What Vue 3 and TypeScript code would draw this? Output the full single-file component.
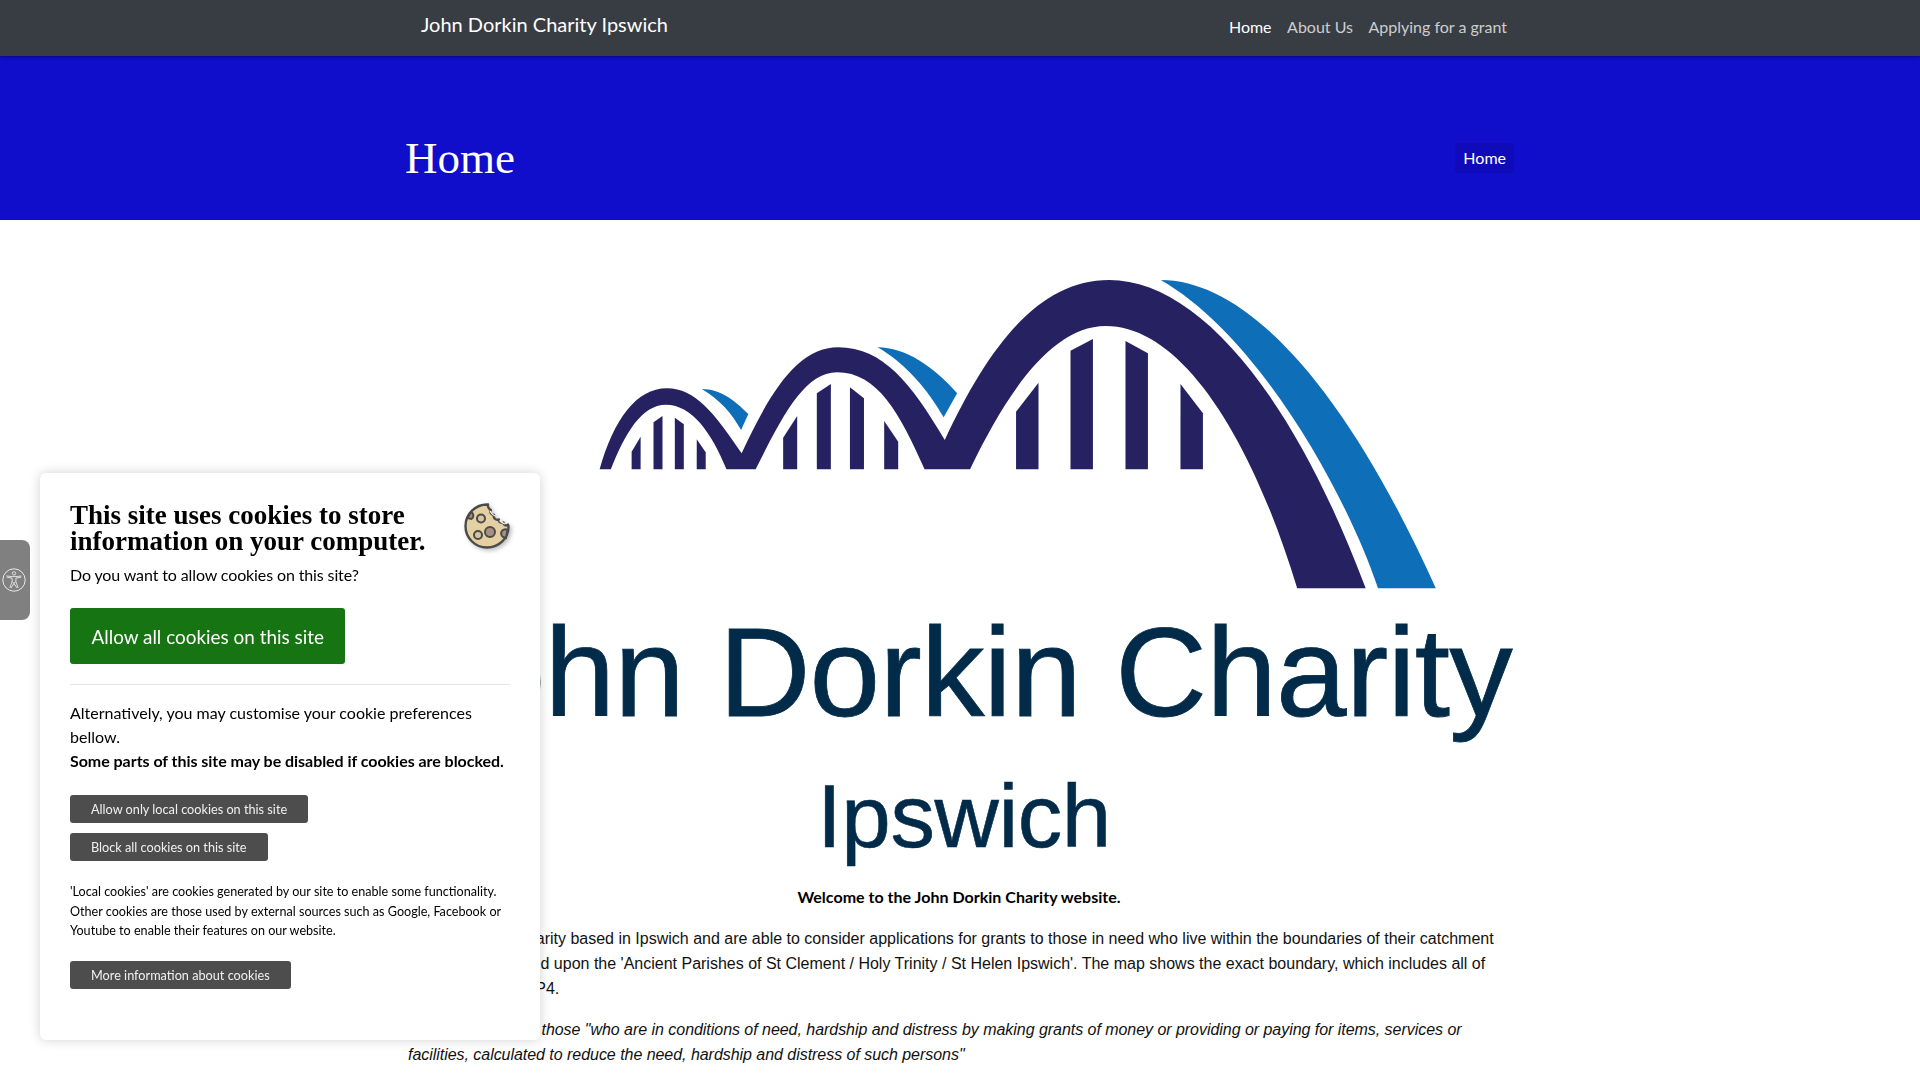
<template>
  <div class="page">
    <nav class="topbar">
      <div class="topbar-inner">
        <a class="brand">John Dorkin Charity Ipswich</a>
        <ul class="nav-links">
          <li v-for="link in navLinks" :key="link" :class="{ active: link === 'Home' }">{{ link }}</li>
        </ul>
      </div>
    </nav>

    <header class="banner">
      <div class="banner-inner">
        <h1>Home</h1>
        <span class="crumb">Home</span>
      </div>
    </header>

    <main class="content">
      <svg class="logo" viewBox="0 0 1110 664" width="1110" height="664">
        <g transform="translate(175 40) scale(0.5612 0.3333)">
          <path
            fill="#262262"
            d="M35 628 C60 480 100 385 155 385 C205 385 240 460 288 580 C340 390 390 262 460 262 C540 262 590 370 650 540 C730 250 820 60 943 60 C1095 60 1265 380 1400 985 L1278 985 C1190 500 1065 198 937 198 C840 198 760 400 695 628 L614 628 C570 460 530 337 458 337 C400 337 360 470 313 628 L261 628 C235 520 200 434 153 434 C110 434 80 520 55 628 Z"
          />
          <polygon
            v-for="bar in bars"
            :key="bar"
            fill="#262262"
            :points="bar"
          />
          <path fill="#0f6eb8" d="M1035 60 C1180 60 1355 350 1525 985 L1422 985 C1365 700 1210 230 1035 60 Z" />
          <path fill="#0f6eb8" d="M530 262 C580 262 630 320 672 400 L648 472 C620 390 580 310 530 262 Z" />
          <path fill="#0f6eb8" d="M217 387 C250 387 275 420 300 462 L287 510 C270 460 250 420 217 387 Z" />
        </g>
        <text class="logo-big" x="1107" y="496" text-anchor="end">John Dorkin Charity</text>
        <text class="logo-small" x="412" y="627">Ipswich</text>
      </svg>

      <p class="welcome">Welcome to the John Dorkin Charity website.</p>
      <p class="body-text">
        We are a small charity based in Ipswich and are able to consider applications for grants to those in need who live within the boundaries of their catchment area which is based upon the 'Ancient Parishes of St Clement / Holy Trinity / St Helen Ipswich'. The map shows the exact boundary, which includes all of<br />
        the area IP3 and IP4.
      </p>
      <p class="body-text"><em>Our goal is to help those "who are in conditions of need, hardship and distress by making grants of money or providing or paying for items, services or facilities, calculated to reduce the need, hardship and distress of such persons"</em></p>
    </main>

    <div class="access-tab">
      <svg viewBox="0 0 24 24" width="24" height="24" fill="none" stroke="#e8e8e8">
        <circle cx="12" cy="12" r="11.2" stroke-width="1" />
        <circle cx="12" cy="5.4" r="1.7" stroke-width="0.9" />
        <path stroke-width="0.9" d="M4.5 8 L10 8.6 H14 L19.5 8 M4.8 9.2 L10 10 L10.2 13.4 L7.8 20 M19.2 9.2 L14 10 L13.8 13.4 L16.2 20 M10.2 13.4 L12 15.5 L13.8 13.4 M9 20 L12 15.5 L15 20" />
      </svg>
    </div>

    <aside class="cookie-panel">
      <div class="cookie-head">
        <h2>This site uses cookies to store information on your computer.</h2>
        <svg class="cookie-icon" viewBox="0 0 46 46" width="46" height="46">
          <path
            fill="#e4d0a2"
            stroke="#4b4b4b"
            stroke-width="2.4"
            stroke-linejoin="round"
            d="M24 1.5 C12 1 1.5 10.500 1.500 23 C1.500 35 11 44.500 23 44.500 C35 44.500 44.500 35 44.500 24 C44.500 23 44.300 22 44 21.500 C42 23.500 39.500 22 39.500 19.500 C37 20.500 34.500 19 34.800 16.500 C31.500 17.500 29 15 30 12 C27 11.500 25.500 9 26.800 7 C25 6 23.500 3.500 24 1.500 Z"
          />
          <path fill="none" stroke="#fff" stroke-width="1.200" d="M26 8 C27 10 29 12 31 13 M35.500 17.500 C37 19 39 20.500 41 21" />
          <circle cx="17" cy="15.500" r="4" fill="#d9c3a2" stroke="#4b4b4b" stroke-width="2" />
          <circle cx="26" cy="29" r="5" fill="#a99182" stroke="#4b4b4b" stroke-width="2" />
          <circle cx="14" cy="32" r="4" fill="#d9c3a2" stroke="#4b4b4b" stroke-width="2" />
          <path fill="#a99182" stroke="#4b4b4b" stroke-width="2" d="M7 9 A4 4 0 0 1 7.500 16 L3.500 15 Z" />
          <path fill="#a99182" stroke="#4b4b4b" stroke-width="2" d="M43.500 27 A4 4 0 0 0 39 34 L42 35 Z" />
        </svg>
      </div>
      <p class="question">Do you want to allow cookies on this site?</p>
      <button class="btn-allow">Allow all cookies on this site</button>
      <hr />
      <p class="alt-text">
        Alternatively, you may customise your cookie preferences bellow.<br />
        <strong>Some parts of this site may be disabled if cookies are blocked.</strong>
      </p>
      <div class="small-buttons">
        <button class="btn-small">Allow only local cookies on this site</button>
        <button class="btn-small">Block all cookies on this site</button>
      </div>
      <p class="note">
        'Local cookies' are cookies generated by our site to enable some functionality. Other cookies are those used by external sources such as Google, Facebook or Youtube to enable their features on our website.
      </p>
      <button class="btn-small">More information about cookies</button>
    </aside>
  </div>
</template>

<script setup lang="ts">
const navLinks: string[] = ['Home', 'About Us', 'Applying for a grant']

// supports of the three arches, traced off the logo
const bars: string[] = [
  '92,628 92,575 108,530 108,628',
  '131,628 131,487 147,468 147,628',
  '169,628 169,473 185,493 185,628',
  '208,628 208,538 224,577 224,628',
  '362,628 362,533 387,468 387,628',
  '422,628 422,400 447,372 447,628',
  '481,628 481,382 506,415 506,628',
  '542,628 542,483 567,545 567,628',
  '777,628 777,455 817,368 817,628',
  '874,628 874,272 914,237 914,628',
  '972,628 972,243 1012,280 1012,628',
  '1070,628 1070,372 1110,460 1110,628',
]
</script>

<style>
html,
body {
  margin: 0;
  background: #fff;
}
</style>

<style scoped>
.page {
  font-family: Lato, 'Liberation Sans', sans-serif;
  color: #000;
}

.topbar {
  position: relative;
  height: 56px;
  background-color: #383c43;
  box-shadow: 0 1px 3px rgba(0, 0, 0, 0.4);
}

.topbar-inner {
  width: 1140px;
  margin: 0 auto;
  padding: 0 23px 0 31px;
  box-sizing: border-box;
  display: flex;
  justify-content: space-between;
}

.brand {
  font-size: 20px;
  line-height: 24px;
  margin-top: 12px;
  color: #fff;
}

.nav-links {
  display: flex;
  gap: 15.5px;
  list-style: none;
  margin: 15px 0 0;
  padding: 0;
  font-size: 16px;
  line-height: 24px;
  color: rgba(255, 255, 255, 0.75);
}

.nav-links .active {
  color: #fff;
}

.banner {
  height: 164px;
  background-color: #100dcb;
}

.banner-inner {
  width: 1140px;
  height: 100%;
  margin: 0 auto;
  padding: 40px 16px 0 15px;
  box-sizing: border-box;
  display: flex;
  justify-content: space-between;
  align-items: center;
}

.banner h1 {
  margin: 0;
  font-family: 'Liberation Serif', serif;
  font-weight: 400;
  font-size: 45px;
  color: #fff;
}

.crumb {
  padding: 3px 8px;
  font-size: 16px;
  line-height: 24px;
  color: #fff;
  background-color: #0f0bb8;
  border-radius: 4px;
}

.content {
  width: 1140px;
  margin: 0 auto;
  padding: 0 15px;
  box-sizing: border-box;
}

.logo {
  display: block;
}

.logo-big {
  font-family: 'Liberation Sans', sans-serif;
  font-size: 127px;
  letter-spacing: -0.8px;
  fill: #022b4a;
  stroke: #022b4a;
  stroke-width: 0.8px;
}

.logo-small {
  font-family: 'Liberation Sans', sans-serif;
  font-size: 89px;
  letter-spacing: -0.4px;
  fill: #022b4a;
  stroke: #022b4a;
  stroke-width: 0.6px;
}

.welcome {
  margin: 0 2px 17px 0;
  font-size: 16px;
  line-height: 25px;
  font-weight: 700;
  letter-spacing: 0.02px;
  text-align: center;
}

.body-text {
  margin: 0 0 16px;
  padding: 0 3px;
  font-family: 'Liberation Sans', sans-serif;
  font-size: 16px;
  line-height: 25px;
  color: #111;
}

.body-text em {
  letter-spacing: -0.04px;
}

.access-tab {
  position: fixed;
  left: 0;
  top: 540px;
  width: 30px;
  height: 80px;
  display: flex;
  align-items: center;
  padding-left: 2px;
  box-sizing: border-box;
  background-color: #808080;
  border-radius: 0 8px 8px 0;
}

.cookie-panel {
  position: fixed;
  left: 40px;
  top: 473px;
  width: 500px;
  height: 567px;
  padding: 30px;
  box-sizing: border-box;
  background: #fff;
  border-radius: 6px;
  box-shadow: 0 0 12px rgba(0, 0, 0, 0.18);
}

.cookie-head {
  display: flex;
  justify-content: space-between;
  align-items: flex-start;
}

.cookie-head h2 {
  width: 380px;
  margin: -1px 0 1px;
  font-family: 'Liberation Serif', serif;
  font-weight: 700;
  font-size: 27px;
  line-height: 26px;
}

.cookie-icon {
  filter: drop-shadow(2px 2px 2px rgba(0, 0, 0, 0.25));
}

.question {
  margin: 8px 0 0;
  font-size: 16px;
  line-height: 24px;
  letter-spacing: -0.12px;
}

.btn-allow {
  display: block;
  margin-top: 21px;
  height: 56px;
  padding: 0 21.5px;
  border: 0;
  border-radius: 3px;
  font-family: inherit;
  font-size: 18.9px;
  color: #fff;
  background-color: #177413;
}

hr {
  margin: 20px 0 16px;
  border: 0;
  border-top: 1px solid #e3e3e3;
}

.alt-text {
  margin: 0;
  font-size: 16px;
  line-height: 24px;
}

.alt-text strong {
  letter-spacing: -0.04px;
}

.small-buttons {
  display: flex;
  flex-direction: column;
  align-items: flex-start;
  gap: 10px;
  margin-top: 22px;
}

.btn-small {
  display: block;
  height: 28px;
  padding: 0 21px;
  border: 0;
  border-radius: 3px;
  font-family: inherit;
  font-size: 12.7px;
  color: #f0f0f0;
  background-color: #4d4d4d;
}

.note {
  margin: 21px 0 20px;
  font-size: 12.6px;
  line-height: 19.5px;
}
</style>
